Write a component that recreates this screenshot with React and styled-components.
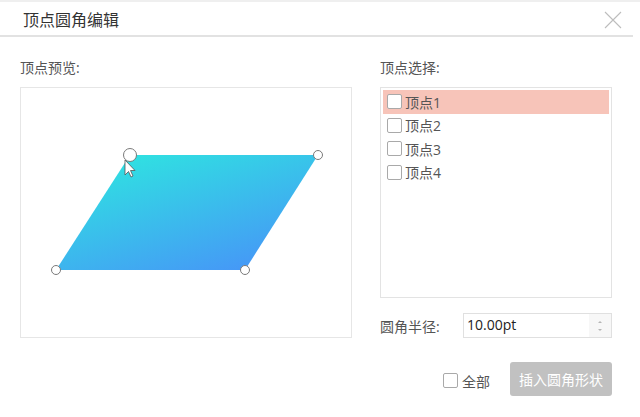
import React, { useState } from 'react';
import styled, { createGlobalStyle } from 'styled-components';

const Global = createGlobalStyle`
  html, body { margin: 0; padding: 0; background: #fff; }
  body { font-family: "Open Sans", "Noto Sans CJK SC", sans-serif; }
`;

const Dialog = styled.div`
  width: 640px;
  height: 417px;
  box-sizing: border-box;
  border-top: 2px solid #efefef;
  background: #fff;
  display: flex;
  flex-direction: column;
`;

const Header = styled.div`
  height: 33px;
  margin-right: 7px;
  display: flex;
  align-items: center;
  justify-content: space-between;
  padding-left: 23px;
  padding-right: 11px;
  border-bottom: 2px solid #e2e2e2;
  font-size: 16px;
  color: #333;
`;

const Close = styled.svg`
  width: 18px;
  height: 18px;
  margin-top: 3px;
`;

const Body = styled.div`
  display: grid;
  grid-template-columns: 332px 232px;
  column-gap: 28px;
  padding: 21px 0 0 20px;
`;

const Column = styled.div`
  display: flex;
  flex-direction: column;
`;

const Label = styled.div`
  font-size: 14px;
  color: #555;
  height: 20px;
  line-height: 20px;
  margin-bottom: 9px;
`;

const Preview = styled.div`
  height: 251px;
  box-sizing: border-box;
  border: 1px solid #e6e6e6;
`;

const List = styled.div`
  height: 211px;
  box-sizing: border-box;
  border: 1px solid #e3e3e3;
  padding: 2px;
`;

const Row = styled.div`
  height: 23.5px;
  display: flex;
  align-items: center;
  padding-left: 4px;
  background: ${p => (p.$active ? '#f7c4b9' : 'transparent')};
  font-size: 14px;
  color: #555;
`;

const Box = styled.span`
  width: 15px;
  height: 15px;
  box-sizing: border-box;
  border: 1px solid #a9a9a9;
  border-radius: 2px;
  background: #fff;
  margin-right: ${p => (p.$wide ? 4 : 3)}px;
  flex-shrink: 0;
`;

const RadiusRow = styled.div`
  display: flex;
  align-items: center;
  margin-top: 15px;
  height: 25px;
`;

const RadiusLabel = styled.span`
  width: 83px;
  font-size: 14px;
  color: #555;
`;

const Input = styled.div`
  flex: 1;
  height: 25px;
  box-sizing: border-box;
  border: 1px solid #e0e0e0;
  display: flex;
`;

const Value = styled.div`
  flex: 1;
  padding-left: 3px;
  font-size: 14px;
  line-height: 21px;
  color: #222;
`;

const Spin = styled.div`
  width: 22px;
  background: #f7f7f7;
  display: flex;
  flex-direction: column;
  align-items: center;
  justify-content: center;
  gap: 6px;
`;

const Arrow = styled.span`
  width: 0;
  height: 0;
  border-left: 2px solid transparent;
  border-right: 2px solid transparent;
  ${p => (p.$up ? 'border-bottom: 2px solid #b5b5b5;' : 'border-top: 2px solid #b5b5b5;')}
`;

const Footer = styled.div`
  display: flex;
  justify-content: flex-end;
  align-items: center;
  padding-right: 28px;
  margin-top: 24px;
  gap: 20px;
`;

const All = styled.label`
  display: flex;
  align-items: center;
  font-size: 14px;
  color: #555;
  margin-top: 3px;
`;

const Button = styled.button`
  width: 102px;
  height: 34px;
  border: none;
  border-radius: 3px;
  background: #c1c1c1;
  color: #fff;
  font-family: inherit;
  font-size: 14px;
  padding: 0;
`;

const handles = [
  { x: 297, y: 67, r: 4.5 },
  { x: 224, y: 182, r: 4.5 },
  { x: 35, y: 182, r: 4.5 },
  { x: 109, y: 67, r: 6.5 },
];

function Shape() {
  return (
    <svg width="330" height="249" viewBox="0 0 330 249">
      <defs>
        <linearGradient id="fill" x1="0.15" y1="0" x2="0.85" y2="1">
          <stop offset="0" stopColor="#2ee6e0" />
          <stop offset="1" stopColor="#4793f8" />
        </linearGradient>
      </defs>
      <polygon points="109,67 297,67 224,182 35,182" fill="url(#fill)" />
      {handles.map((h, i) => (
        <circle key={i} cx={h.x} cy={h.y} r={h.r} fill="#fff" stroke="#7a7a7a" strokeWidth="1" />
      ))}
      <path
        d="M104 72 L104 87 L107.5 83.5 L110 89 L112 88 L109.5 82.5 L114 82.5 Z"
        fill="#fff"
        stroke="#555"
        strokeWidth="0.8"
        strokeLinejoin="round"
      />
    </svg>
  );
}

export default function App() {
  const [items] = useState(['顶点1', '顶点2', '顶点3', '顶点4']);
  return (
    <Dialog>
      <Global />
      <Header>
        <span>顶点圆角编辑</span>
        <Close viewBox="0 0 18 18">
          <path d="M1 1 L17 17 M17 1 L1 17" stroke="#bdbdbd" strokeWidth="1.1" />
        </Close>
      </Header>
      <Body>
        <Column>
          <Label>顶点预览:</Label>
          <Preview>
            <Shape />
          </Preview>
        </Column>
        <Column>
          <Label>顶点选择:</Label>
          <List>
            {items.map((t, i) => (
              <Row key={t} $active={i === 0}>
                <Box />
                {t}
              </Row>
            ))}
          </List>
          <RadiusRow>
            <RadiusLabel>圆角半径:</RadiusLabel>
            <Input>
              <Value>10.00pt</Value>
              <Spin>
                <Arrow $up />
                <Arrow />
              </Spin>
            </Input>
          </RadiusRow>
        </Column>
      </Body>
      <Footer>
        <All>
          <Box $wide />
          全部
        </All>
        <Button>插入圆角形状</Button>
      </Footer>
    </Dialog>
  );
}
